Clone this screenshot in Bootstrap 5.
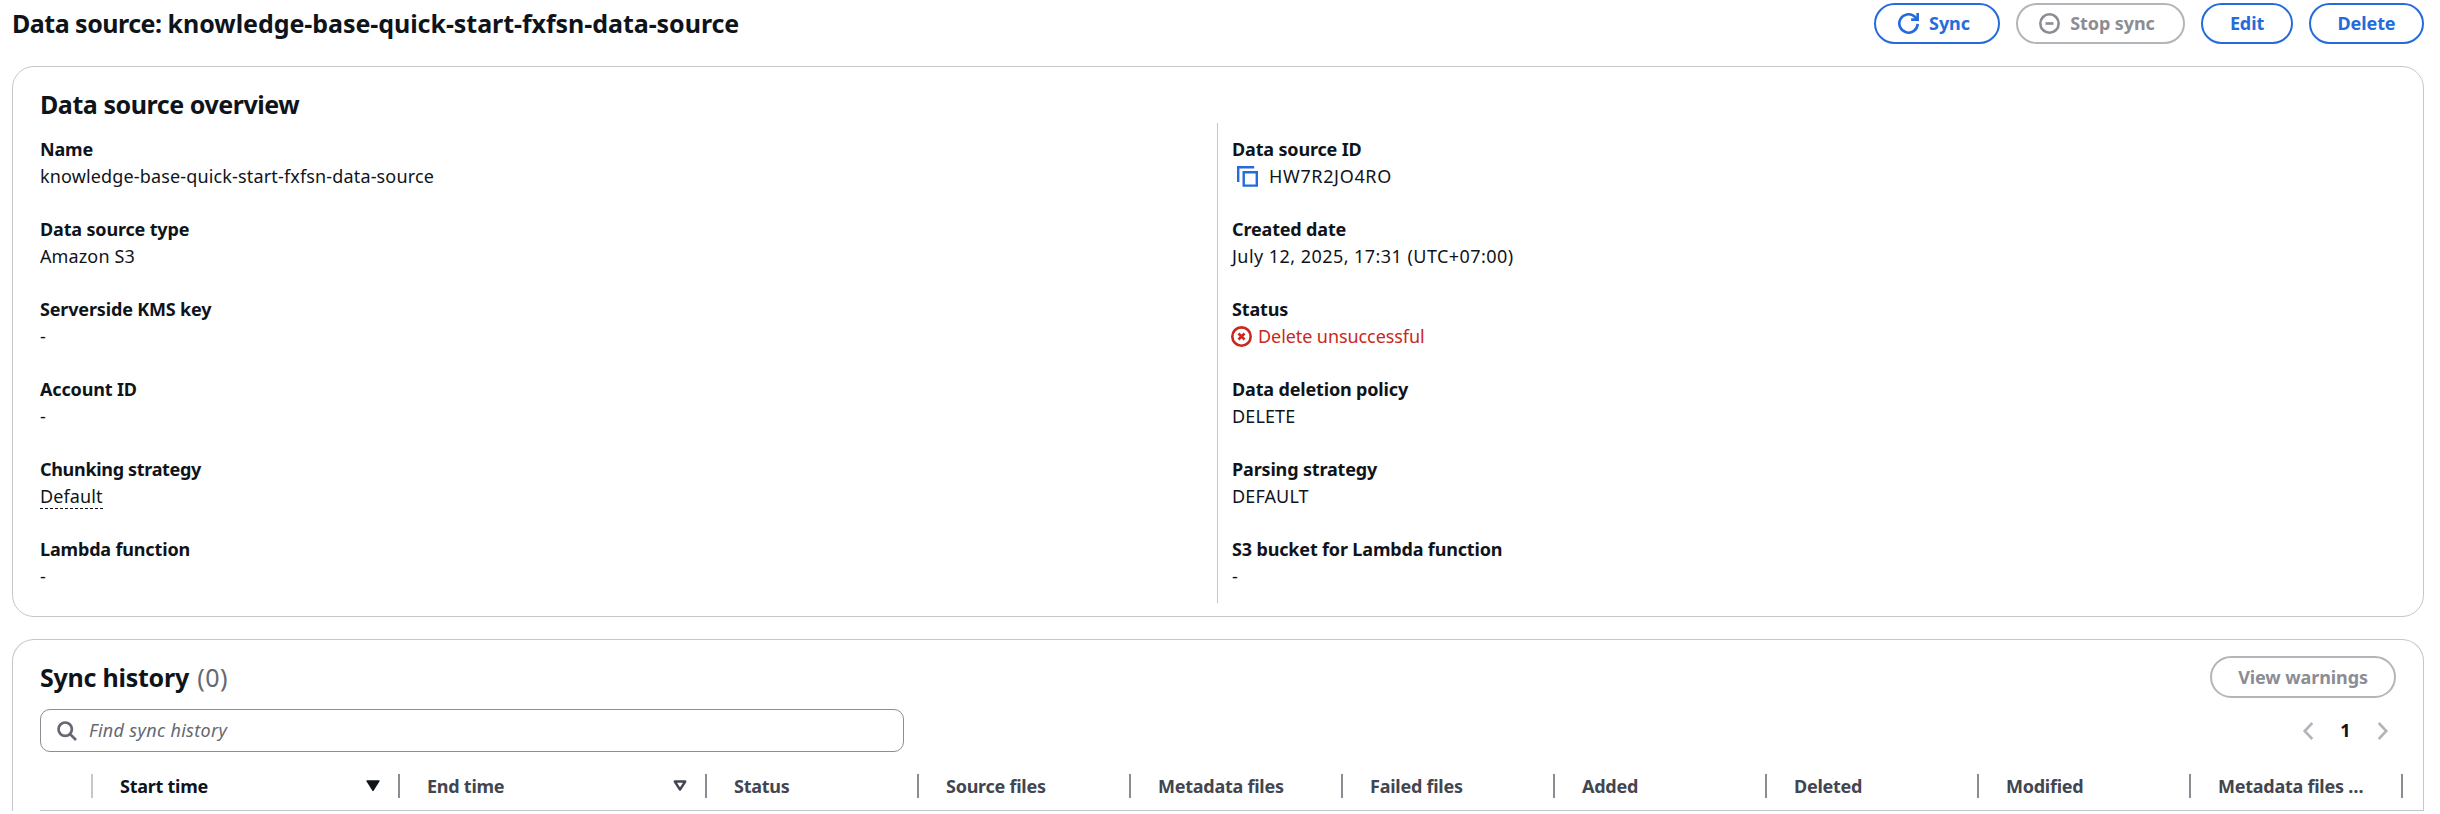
<!DOCTYPE html>
<html lang="en">
<head>
<meta charset="utf-8">
<meta name="viewport" content="width=device-width, initial-scale=1">
<title>Data source</title>
<link href="https://cdn.jsdelivr.net/npm/bootstrap@5.3.0/dist/css/bootstrap.min.css" rel="stylesheet">
<style>
  :root { --ink:#0f141a; --accent:#256bdb; --line:#c6c6cd; --muted:#656871; --off:#8c8c94; --off-line:#b4b4bb; --danger:#c9281c; }
  html, body { height:100%; overflow:hidden; }
  body { font-family:"Noto Sans","Open Sans",sans-serif; font-size:18px; line-height:27px; color:var(--ink); background:#fff; }
  .page { padding:3px 16px 0 12px; }
  h1, h2 { font-size:25px; line-height:34px; font-weight:700; }
  h1 { letter-spacing:-.05px; padding-bottom:1px; }
  h1 span { letter-spacing:-.5px; }
  .pill { --bs-btn-border-radius:21px; --bs-btn-border-width:2.5px; --bs-btn-font-weight:700; --bs-btn-font-size:18px; --bs-btn-line-height:27px;
    --bs-btn-padding-x:0; --bs-btn-padding-y:0; --bs-btn-color:var(--accent); --bs-btn-border-color:var(--accent);
    --bs-btn-disabled-color:var(--off); --bs-btn-disabled-border-color:var(--off-line); --bs-btn-disabled-opacity:1;
    height:41px; letter-spacing:-.1px; display:flex; align-items:center; justify-content:center; white-space:nowrap; }
  .pill svg { width:21px; height:21px; margin-right:10px; }
  .pill-sync { width:126px; padding-right:6px; }
  .pill-stop { width:169px; padding-right:7px; }
  .pill-edit { width:92px; }
  .pill-del { width:115px; }
  .pill-warn { width:186px; height:42px; }
  .header-row { gap:16px; margin-bottom:22px; }
  .panel { border:1px solid var(--line); border-radius:22px; padding:20px 27px 0; }
  .overview { height:551px; margin-bottom:22px; }
  .overview h2 { letter-spacing:-.44px; margin-bottom:2px; }
  .facts { display:grid; grid-template-columns:1177px 1fr; height:480px; }
  .facts dl { margin:0; padding-top:13px; display:flex; flex-direction:column; gap:26px; }
  .facts dl + dl { border-left:1px solid var(--line); padding-left:14px; }
  .facts dl + dl svg { margin-left:-1px; }
  dt { font-weight:700; letter-spacing:-.16px; }
  dd { margin:0; letter-spacing:.12px; }
  .t-name { letter-spacing:.15px; } .t-date { letter-spacing:.45px; } .t-id { letter-spacing:.65px; }
  .t-fail { letter-spacing:-.08px; color:var(--danger); gap:6px; }
  .t-id { padding-left:4px; gap:9px; }
  .tight { letter-spacing:-.32px; }
  .hint { border-bottom:1px dashed var(--ink); line-height:27px; display:inline-block; height:26px; vertical-align:top; }
  .history { height:172px; padding:16px 0 0 27px; border-radius:22px 22px 0 0; border-bottom:0; }
  .history h2 { margin:0; letter-spacing:-.25px; }
  .history h2 span { color:var(--muted); font-weight:400; letter-spacing:.5px; margin-left:2px; }
  .title-row { padding-right:27px; margin-bottom:11px; }
  .search-box { width:864px; height:43px; border:1px solid #8c8c94; border-radius:10px; padding-left:16px; gap:12px; }
  .search-box input { border:0; outline:0; flex:1; padding:0; color:var(--ink); background:none; letter-spacing:.32px; }
  .search-box input::placeholder { color:var(--muted); font-style:italic; opacity:1; }
  .pager { padding-right:30px; }
  .pager b { width:55px; text-align:center; font-weight:700; }
  .sync-table { --bs-table-bg:transparent; table-layout:fixed; width:2383px; margin:9px 0 0; border-collapse:separate; border-spacing:0; }
  .sync-table th { padding:1px 0 0; height:50px; border-bottom:1px solid var(--line); font-weight:700; color:#424650; vertical-align:middle; letter-spacing:-.25px; }
  .sync-table th > div { height:24px; padding:1px 0 0 27px; border-right:2px solid #8c8c94; display:flex; align-items:center; justify-content:space-between; white-space:nowrap; }
  .sync-table th:first-child > div { border-color:var(--line); }
  .sync-table th.sorted { color:var(--ink); }
  .sync-table svg { margin:0 18px 1px 0; }
  .c-pick { width:53px; } .c-time { width:307px; } .c-num { width:212px; }
</style>
<script src="https://cdn.jsdelivr.net/npm/bootstrap@5.3.0/dist/js/bootstrap.bundle.min.js"></script>
</head>
<body>
<main class="page">
  <header class="header-row d-flex align-items-center">
    <h1 class="mb-0 me-auto"><span>Data source: </span>knowledge-base-quick-start-fxfsn-data-source</h1>
    <button class="btn pill pill-sync" type="button">
      <svg viewBox="0 0 16 16" fill="none" stroke="currentColor" stroke-width="2"><path d="M15 8.3A7 7 0 1 1 12.6 2.7L15 5"/><path d="M15 0v5h-5"/></svg>Sync</button>
    <button class="btn pill pill-stop" type="button" disabled>
      <svg viewBox="0 0 16 16" fill="none" stroke="currentColor" stroke-width="2"><circle cx="8" cy="8" r="7"/><path d="M5 8h6"/></svg>Stop sync</button>
    <button class="btn pill pill-edit" type="button">Edit</button>
    <button class="btn pill pill-del" type="button">Delete</button>
  </header>

  <section class="panel overview">
    <h2>Data source overview</h2>
    <div class="facts">
      <dl>
        <div><dt>Name</dt><dd class="t-name">knowledge-base-quick-start-fxfsn-data-source</dd></div>
        <div><dt>Data source type</dt><dd>Amazon S3</dd></div>
        <div><dt>Serverside KMS key</dt><dd>-</dd></div>
        <div><dt>Account ID</dt><dd>-</dd></div>
        <div><dt class="tight">Chunking strategy</dt><dd><span class="hint">Default</span></dd></div>
        <div><dt>Lambda function</dt><dd>-</dd></div>
      </dl>
      <dl>
        <div><dt>Data source ID</dt><dd class="t-id d-flex align-items-center"><svg width="25" height="21" viewBox="0 0 25 21" fill="none" stroke="#256bdb" stroke-width="2.4"><path d="M3.2 16V1.2h16"/><path d="M8.7 6.2h13.1v13.4H8.7z"/></svg>HW7R2JO4RO</dd></div>
        <div><dt>Created date</dt><dd class="t-date">July 12, 2025, 17:31 (UTC+07:00)</dd></div>
        <div><dt>Status</dt><dd class="t-fail d-flex align-items-center"><svg width="21" height="21" viewBox="0 0 16 16" fill="none" stroke="currentColor" stroke-width="2"><circle cx="8" cy="8" r="7"/><path d="m5.7 5.7 4.6 4.6m0-4.6-4.6 4.6"/></svg><span>Delete unsuccessful</span></dd></div>
        <div><dt>Data deletion policy</dt><dd>DELETE</dd></div>
        <div><dt>Parsing strategy</dt><dd>DEFAULT</dd></div>
        <div><dt>S3 bucket for Lambda function</dt><dd>-</dd></div>
      </dl>
    </div>
  </section>

  <section class="panel history">
    <div class="title-row d-flex align-items-center justify-content-between">
      <h2>Sync history <span>(0)</span></h2>
      <button class="btn pill pill-warn" type="button" disabled>View warnings</button>
    </div>
    <div class="d-flex align-items-center justify-content-between">
      <div class="search-box d-flex align-items-center">
        <svg width="20" height="20" viewBox="0 0 20 20" fill="none" stroke="#656871" stroke-width="2.7"><circle cx="8.2" cy="8.2" r="6.7"/><path d="m13 13 6 6"/></svg>
        <input type="text" placeholder="Find sync history" aria-label="Find sync history">
      </div>
      <nav class="pager d-flex align-items-center" aria-label="Pages">
        <svg width="20" height="20" viewBox="0 0 20 20" fill="none" stroke="#b4b4bb" stroke-width="2.6"><path d="M14.3 2 6.7 10l7.6 8"/></svg>
        <b>1</b>
        <svg width="20" height="20" viewBox="0 0 20 20" fill="none" stroke="#b4b4bb" stroke-width="2.6"><path d="m5.7 2 7.6 8-7.6 8"/></svg>
      </nav>
    </div>
    <table class="table sync-table">
      <colgroup><col class="c-pick"><col class="c-time" span="2"><col class="c-num" span="8"><col></colgroup>
      <thead><tr>
        <th><div></div></th>
        <th class="sorted"><div>Start time <svg width="14" height="12" viewBox="0 0 14 12"><path d="M1 1h12L7 10.5z" fill="currentColor" stroke="currentColor" stroke-width="1.4" stroke-linejoin="round"/></svg></div></th>
        <th><div>End time <svg width="14" height="12" viewBox="0 0 14 12"><path d="M1.8 1.5h10.4L7 9.6z" fill="none" stroke="currentColor" stroke-width="2.4" stroke-linejoin="round"/></svg></div></th>
        <th><div>Status</div></th>
        <th><div>Source files</div></th>
        <th><div>Metadata files</div></th>
        <th><div>Failed files</div></th>
        <th><div>Added</div></th>
        <th><div>Deleted</div></th>
        <th><div>Modified</div></th>
        <th><div>Metadata files …</div></th>
        <th></th>
      </tr></thead>
    </table>
  </section>
</main>
</body>
</html>
